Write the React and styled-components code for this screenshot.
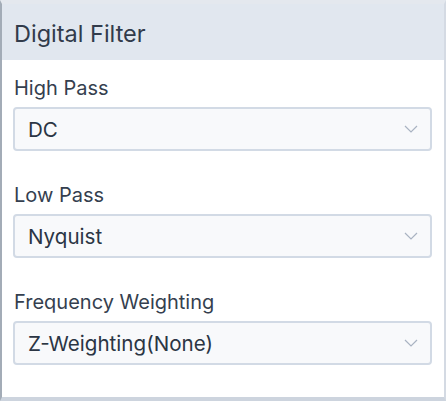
import styled, { createGlobalStyle } from "styled-components";

const GlobalStyle = createGlobalStyle`
  html, body {
    margin: 0;
    padding: 0;
    background: #ffffff;
  }
  * {
    box-sizing: border-box;
  }
`;

const Page = styled.div`
  width: 448px;
  height: 401px;
  overflow: hidden;
  background: #ffffff;
`;

const Panel = styled.div`
  width: 446px;
  height: 401px;
  background: #ffffff;
  border-top: 4px solid #e4e8ee;
  border-left: 2px solid #a3acb7;
  border-right: 2px solid #d4dae3;
  border-bottom: 4px solid #cdd4de;
  display: flex;
  flex-direction: column;
  font-family: Inter, "Noto Sans", sans-serif;
  color: #323c4c;
`;

const Header = styled.div`
  height: 56px;
  background: #e1e7ef;
  display: flex;
  align-items: center;
  padding: 2px 0 0 12px;
  font-size: 23.5px;
  font-weight: 400;
  color: #313b4b;
`;

const Body = styled.div`
  display: flex;
  flex-direction: column;
  padding: 16px 12px 0 11px;
  gap: 32px;
`;

const Field = styled.div`
  display: flex;
  flex-direction: column;
  gap: 7px;
`;

const Label = styled.div`
  font-size: 20px;
  line-height: 24px;
  padding-left: 1px;
  color: #353f4f;
`;

const Select = styled.div`
  height: 44px;
  border: 2px solid #d2dae5;
  border-radius: 4px;
  background: #f8f9fb;
  display: flex;
  align-items: center;
  justify-content: space-between;
  padding: 0 12px 0 13px;
  font-size: 20.6px;
  color: #2b3544;
`;

const Chevron = () => (
  <svg width="14" height="8" viewBox="0 0 14 8" fill="none">
    <path d="M1 1l6 6 6-6" stroke="#a9b3c2" strokeWidth="1.2" />
  </svg>
);

const fields = [
  { label: "High Pass", value: "DC" },
  { label: "Low Pass", value: "Nyquist" },
  { label: "Frequency Weighting", value: "Z-Weighting(None)" },
];

export default function App() {
  return (
    <Page>
      <GlobalStyle />
      <Panel>
        <Header>Digital Filter</Header>
        <Body>
          {fields.map((f) => (
            <Field key={f.label}>
              <Label>{f.label}</Label>
              <Select>
                <span>{f.value}</span>
                <Chevron />
              </Select>
            </Field>
          ))}
        </Body>
      </Panel>
    </Page>
  );
}
